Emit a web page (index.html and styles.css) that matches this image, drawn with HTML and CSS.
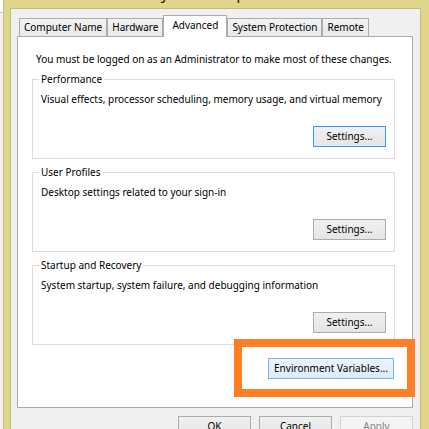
FILE: index.html
```html
<!DOCTYPE html>
<html lang="en">
<head>
  <meta charset="UTF-8" />
  <meta name="viewport" content="width=device-width, initial-scale=1.0" />
  <title>System Properties</title>
  <link rel="stylesheet" href="styles.css">
</head>
<body>
  <div class="screen">
    <div class="edge"><div class="edge-top"></div></div>
    <div class="frame">
      <div class="titlebar"><span class="title">System Properties</span></div>
      <div class="dialog">
        <div class="tabs">
          <div class="tab">Computer Name</div>
          <div class="tab">Hardware</div>
          <div class="tab tab-active">Advanced</div>
          <div class="tab">System Protection</div>
          <div class="tab">Remote</div>
        </div>
        <div class="panel">
          <p class="note">You must be logged on as an Administrator to make most of these changes.</p>
          <fieldset class="group">
            <legend>Performance</legend>
            <p>Visual effects, processor scheduling, memory usage, and virtual memory</p>
            <div class="group-actions"><button class="btn btn-default">Settings...</button></div>
          </fieldset>
          <fieldset class="group">
            <legend>User Profiles</legend>
            <p>Desktop settings related to your sign-in</p>
            <div class="group-actions"><button class="btn">Settings...</button></div>
          </fieldset>
          <fieldset class="group">
            <legend>Startup and Recovery</legend>
            <p>System startup, system failure, and debugging information</p>
            <div class="group-actions"><button class="btn">Settings...</button></div>
          </fieldset>
          <div class="env-row"><button class="btn btn-hover">Environment Variables...</button></div>
        </div>
        <div class="dialog-actions">
          <button class="btn">OK</button>
          <button class="btn">Cancel</button>
          <button class="btn" disabled>Apply</button>
        </div>
      </div>
    </div>
    <!-- orange marker drawn over the screenshot -->
    <div class="highlight"></div>
  </div>
</body>
</html>
```

FILE: styles.css
```css
* {
  box-sizing: border-box;
}
body {
  margin: 0;
  width: 429px;
  height: 429px;
  overflow: hidden;
  font-family: "Noto Sans", sans-serif;
  font-size: 10px;
  color: #000;
  background: #f0f0f0;
}
.screen {
  position: relative;
  display: flex;
  height: 429px;
}
.edge {
  width: 3px;
  flex: none;
  background: #f0f0f0;
}
.edge-top {
  height: 13px;
  background: #fff;
  border-bottom: 1px solid #c4c4c4;
}
.frame {
  flex: 1;
  display: flex;
  flex-direction: column;
  background: #ded78b;
  border-left: 1px solid #cbc47c;
  padding: 0 8px 0 6px;
}
.titlebar {
  height: 8px;
  flex: none;
  overflow: hidden;
  padding-left: 142px;
}
.title {
  display: block;
  font-size: 16px;
  line-height: 16px;
  margin-top: -15px;
  white-space: nowrap;
  color: #1a1a1a;
}
.dialog {
  flex: 1;
  background: #f0f0f0;
  border: 1px solid #c5bd70;
  border-bottom: none;
  padding: 6px 7px 0 6px;
}

/* tabs */
.tabs {
  display: flex;
  align-items: flex-end;
  height: 21px;
  padding-left: 2px;
}
.tab {
  height: 18px;
  padding: 0 4px;
  border: 1px solid #acacac;
  border-bottom: none;
  background: linear-gradient(#f2f2f2, #e9e9e9);
  line-height: 17px;
  white-space: nowrap;
}
.tab-active {
  position: relative;
  z-index: 1;
  height: 22px;
  margin-bottom: -1px;
  padding: 1px 8px 0;
  background: #fff;
}
.panel {
  background: #fff;
  border: 1px solid #acacac;
  padding: 16px 17px 28px 14px;
}
.note {
  margin: 0 0 1px 4px;
  line-height: 13px;
  white-space: nowrap;
}

/* group boxes */
.group {
  margin: 7px 0 0;
  padding: 7px 8px 11px;
  border: 1px solid #dcdcdc;
  min-width: 0;
}
.group legend {
  padding: 0 2px;
  margin-left: -2px;
  line-height: 13px;
}
.group p {
  margin: 0;
  line-height: 13px;
  white-space: nowrap;
}
.group-actions {
  display: flex;
  justify-content: flex-end;
  margin-top: 20px;
}

/* buttons */
.btn {
  width: 73px;
  height: 21px;
  padding: 0;
  font: inherit;
  line-height: 19px;
  color: #000;
  border: 1px solid #acacac;
  border-radius: 0;
  background: linear-gradient(#f0f0f0, #e5e5e5);
}
.btn-default {
  border-color: #3399ff;
}
.btn-hover {
  width: 126px;
  border-color: #7eb4ea;
  background: linear-gradient(#ecf4fc, #dcecfc);
}
.btn:disabled {
  color: #838383;
  border-color: #d5d5d5;
  background: #f4f4f4;
}
.env-row {
  display: flex;
  justify-content: flex-end;
  margin-top: 13px;
  padding-right: 1px;
}
.dialog-actions {
  display: flex;
  justify-content: flex-end;
  gap: 8px;
  margin-top: 8px;
}
.highlight {
  position: absolute;
  left: 234px;
  top: 339px;
  width: 181px;
  height: 58px;
  border: 8px solid #ff7f27;
  pointer-events: none;
}
```
